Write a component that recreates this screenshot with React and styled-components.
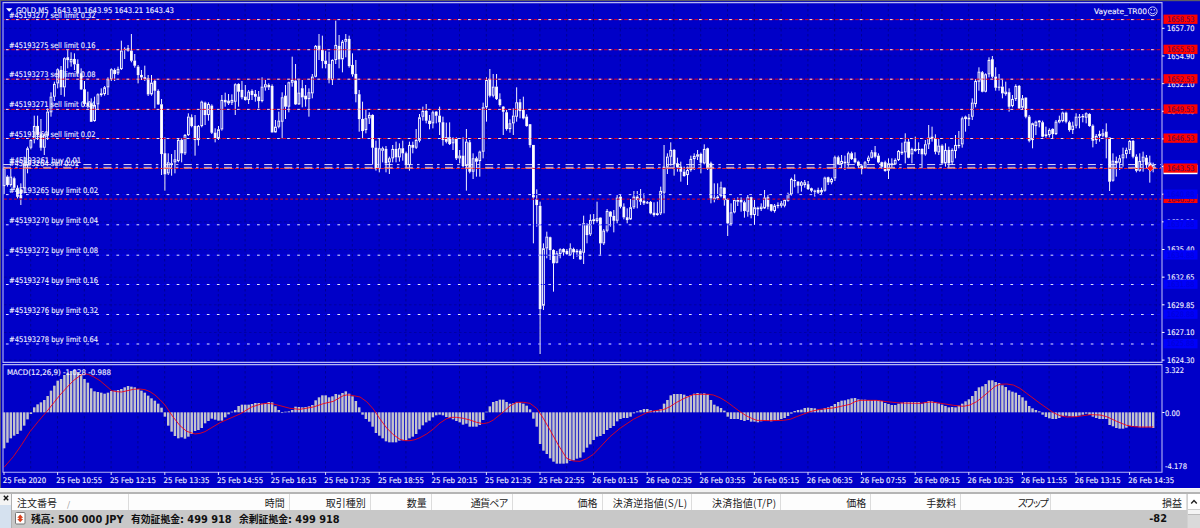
import React from 'react'
import styled, { createGlobalStyle } from 'styled-components';


const GlobalStyle = createGlobalStyle`
    body {
        margin: 0;
        overflow: hidden;
        background-color: #f0f0f0;
    }
`;

const Terminal = styled.div`
    display: flex;
    flex-direction: column;
    width: 1200px;
    height: 528px;
    overflow: hidden;
`;

const ChartPane = styled.svg`
    display: block;
    flex: none;
    background-color: #0000c8;
    font-family: "DejaVu Sans Condensed", "DejaVu Sans", sans-serif;
    font-size: 7.7px;
`;

const Splitter = styled.div`
    flex: none;
    height: 6px;
    box-sizing: border-box;
    background-color: #f1f1f1;
    border-top: 1px solid #fafafa;
    border-bottom: 2px solid #b4b4b4;
`;

const Panel = styled.div`
    display: flex;
    flex: 1;
    min-height: 0;
`;

const SideStrip = styled.div`
    display: flex;
    flex-direction: column;
    width: 12px;
    background-color: #d5e1ef;
    border-right: 1px solid #b0b0b0;
    box-sizing: border-box;
`;

const CloseBox = styled.div`
    display: flex;
    align-items: flex-start;
    justify-content: center;
    height: 11px;
    padding-top: 1px;
    box-sizing: border-box;
    background-color: #f4f4f4;
`;

const Orders = styled.div`
    display: flex;
    flex-direction: column;
    width: 1175px;
`;

const HeadRow = styled.div`
    display: flex;
    height: 16px;
    background-color: #fdfdfd;
`;

const HeadCell = styled.div`
    width: ${(props) => props.$width}px;
    box-sizing: border-box;
    padding: 0 4px 0 5px;
    border-right: 1px solid #dcdcdc;
    text-align: ${(props) => (props.$left ? 'left' : 'right')};
    font-family: "Noto Sans CJK JP", sans-serif;
    font-size: 10px;
    line-height: 17px;
    letter-spacing: ${(props) => props.$spacing || 0}px;
    white-space: pre;
    color: #222;
`;

const SortMark = styled.span`
    margin-left: 10px;
    font-size: 8px;
    color: #888;
`;

const BalanceRow = styled.div`
    display: flex;
    align-items: center;
    flex: 1;
    padding: 0 20px 1px 3px;
    background-color: #c8c8c8;
    font-family: "DejaVu Sans", "Noto Sans CJK JP", sans-serif;
    font-size: 9.8px;
    font-weight: bold;
    color: #111;
`;

const BalanceText = styled.span`
    width: ${(props) => props.$width}px;
    margin-left: ${(props) => props.$gap}px;
    white-space: pre;
`;

const Profit = styled.span`
    margin-left: auto;
`;

const Scroll = styled.div`
    display: flex;
    flex-direction: column;
    width: 13px;
    box-sizing: border-box;
    border-left: 1px solid #d0d0d0;
    background-color: #f4f4f4;
`;

const ScrollUp = styled.div`
    display: flex;
    align-items: center;
    justify-content: center;
    height: 15px;
    background-color: #fff;
    border-bottom: 1px solid #d0d0d0;
`;

const ScrollThumb = styled.div`
    flex: 1;
    margin-top: 4px;
    background-color: #dadada;
    border-top: 1px solid #bbb;
`;

const BAR = 3.35;
const barX = (i) => 4.1 + i * BAR;

// high, body top, body bottom, low (thirds of a pixel), 1 = falling bar
const candles = [
    [500,505,558,583,0],[526,530,555,560,1],[507,530,555,560,0],[530,535,563,570,1],[556,565,590,595,1],[550,570,595,615,1],[470,490,565,580,0],[440,445,495,520,0],
    [418,420,443,448,0],[347,378,418,430,0],[347,378,405,420,1],[357,403,443,452,1],[400,405,443,465,0],[325,335,407,420,0],[277,290,337,350,0],[245,252,290,303,0],
    [205,208,250,265,0],[198,210,262,285,1],[172,175,262,290,0],[150,172,180,205,1],[157,177,187,200,0],[160,177,193,210,1],[178,192,220,228,1],[205,220,268,270,1],
    [243,268,312,318,1],[275,308,318,325,1],[295,310,365,365,1],[290,315,363,365,0],[280,283,313,330,0],[265,280,285,290,0],[258,262,282,287,0],[232,238,262,285,0],
    [205,208,238,243,0],[205,210,222,243,1],[200,207,220,225,0],[122,152,207,210,0],[142,147,150,177,0],[135,145,152,155,1],[102,152,182,187,1],[162,182,197,203,1],
    [195,200,225,250,1],[210,225,232,240,1],[197,232,237,243,1],[225,235,283,288,1],[225,248,283,287,0],[237,243,272,325,1],[268,273,313,315,1],[297,313,462,525,1],
    [412,460,523,572,1],[460,487,520,525,0],[462,490,495,527,0],[450,478,487,520,0],[417,420,483,487,0],[415,420,460,487,1],[402,405,460,465,0],[340,350,405,408,0],
    [343,352,378,382,1],[345,378,420,467,1],[375,378,420,437,0],[302,305,378,382,0],[305,308,345,375,1],[307,312,345,362,0],[313,317,398,402,1],[385,398,415,427,1],
    [378,388,415,420,0],[285,300,388,392,0],[278,300,307,320,1],[282,302,310,315,0],[283,300,308,315,0],[250,253,305,345,0],[250,252,275,320,1],[243,270,292,298,1],
    [255,290,300,302,1],[270,275,300,312,0],[268,273,285,300,1],[270,282,290,305,1],[273,290,303,325,1],[232,260,303,307,0],[240,253,262,272,0],[250,255,262,270,1],
    [253,258,397,398,1],[360,380,397,398,0],[335,362,380,385,0],[277,292,365,415,0],[255,287,320,357,1],[245,247,320,337,0],[170,240,248,260,0],[192,242,313,315,1],
    [240,278,313,315,0],[240,265,292,322,1],[255,287,298,320,1],[265,277,297,350,0],[222,230,280,295,0],[135,138,230,232,0],[102,137,150,180,1],[107,150,183,205,1],
    [152,182,192,205,1],[155,192,238,250,1],[178,180,240,255,0],[62,135,180,192,0],[105,138,178,205,1],[120,125,178,217,0],[102,117,125,172,0],[107,117,198,203,1],
    [160,195,223,230,1],[180,222,282,307,1],[270,283,357,395,1],[305,357,393,415,1],[327,355,390,400,0],[337,345,355,372,0],[343,345,443,493,1],[422,443,507,512,1],
    [415,445,507,517,0],[440,445,452,487,0],[438,447,490,517,1],[470,475,487,522,0],[435,447,475,487,0],[425,447,472,487,1],[430,445,472,485,0],[422,445,460,482,1],
    [455,460,495,505,1],[425,435,495,512,0],[425,435,443,460,1],[387,420,443,447,0],[342,352,422,427,0],[320,333,350,362,0],[312,333,362,370,1],[345,362,372,388,1],
    [332,337,370,385,0],[333,335,347,370,1],[320,347,367,405,1],[350,367,420,437,1],[368,412,425,430,1],[367,412,432,435,1],[412,415,430,450,0],[412,415,475,480,1],
    [450,467,475,490,0],[412,467,498,502,1],[387,425,498,572,0],[420,427,515,520,1],[460,475,515,537,0],[470,475,485,530,1],[452,455,483,530,0],[308,322,455,475,0],
    [232,240,322,365,0],[207,237,287,292,1],[222,260,287,292,0],[222,260,297,300,1],[280,298,315,320,1],[318,320,335,405,1],[330,337,387,392,1],[358,370,387,398,0],
    [325,347,370,405,0],[262,307,350,365,0],[297,307,333,355,1],[290,330,355,358,1],[343,350,378,380,1],[372,373,435,443,1],[435,435,592,730,1],[568,598,615,680,1],
    [605,618,927,1062,1],[730,745,917,930,0],[695,710,745,775,0],[710,712,750,780,1],[748,750,790,875,1],[753,760,788,790,0],[745,748,762,775,0],[745,747,757,767,1],
    [747,753,762,765,1],[730,745,765,765,0],[743,747,757,777,1],[747,752,757,770,1],[747,752,778,780,1],[647,670,758,792,0],[670,672,705,730,1],[643,660,703,708,0],
    [642,658,663,673,1],[605,655,663,668,0],[652,653,730,765,1],[687,692,730,735,0],[627,633,692,697,0],[633,635,650,680,1],[630,648,662,697,1],[585,593,662,670,0],
    [583,590,620,625,1],[610,620,652,658,1],[625,652,660,670,1],[597,622,658,660,0],[573,590,622,627,0],[573,590,600,625,1],[567,595,605,615,1],[580,603,610,615,1],
    [603,607,610,612,1],[603,606,640,643,1],[607,638,645,650,1],[605,640,645,647,1],[560,573,640,645,0],[435,500,578,640,0],[460,470,500,522,0],[427,450,470,497,0],
    [447,450,493,527,1],[473,490,502,515,1],[485,500,515,545,1],[500,515,528,530,1],[500,510,525,555,0],[467,477,510,515,0],[460,468,477,510,0],[450,463,470,480,0],
    [458,462,488,520,1],[433,447,490,493,0],[443,445,505,510,1],[485,490,595,610,1],[550,593,598,607,1],[550,590,595,600,0],[545,562,588,592,0],[562,563,600,617,1],
    [595,597,670,708,1],[610,637,673,677,0],[595,600,637,640,0],[592,600,605,618,0],[592,600,607,635,1],[602,607,633,653,1],[585,592,635,650,0],[590,592,645,655,1],
    [600,622,645,675,0],[620,623,628,648,1],[610,620,627,633,0],[570,593,625,627,0],[583,592,620,628,1],[612,613,632,635,1],[612,617,633,638,0],[607,615,618,625,1],
    [603,610,617,623,0],[598,600,617,622,0],[578,582,602,605,0],[533,537,583,587,0],[523,540,543,562,1],[543,545,557,580,1],[543,547,557,575,0],[540,547,555,563,0],
    [543,553,567,570,1],[563,565,572,577,1],[569,572,574,590,1],[563,570,578,582,1],[563,570,577,582,0],[530,533,572,575,0],[530,532,547,555,1],[533,537,547,553,0],
    [467,472,535,543,0],[467,472,493,495,1],[465,483,492,505,0],[467,485,490,510,1],[455,460,490,500,0],[455,460,477,480,1],[457,475,487,490,1],[482,485,497,505,1],
    [493,497,507,523,1],[483,487,505,507,0],[467,473,483,490,0],[450,457,473,475,0],[438,457,470,475,1],[460,467,487,490,1],[485,487,500,507,1],[482,487,513,515,1],
    [475,490,512,537,0],[475,490,495,503,0],[475,480,493,495,0],[450,453,480,483,0],[428,455,460,465,0],[400,425,457,490,0],[417,425,473,475,1],[443,447,463,490,0],
    [410,447,453,455,0],[427,447,450,462,1],[445,447,463,505,1],[420,433,463,467,0],[375,413,433,447,0],[380,410,417,425,1],[403,415,455,463,1],[417,437,457,465,0],
    [433,437,490,495,1],[430,450,490,500,0],[440,450,490,505,1],[445,450,487,495,0],[405,435,453,475,0],[393,435,438,445,1],[350,355,433,443,0],[347,350,357,395,0],
    [342,353,358,378,0],[295,308,350,360,0],[237,243,312,322,0],[202,215,245,272,0],[213,217,275,277,1],[220,223,275,277,0],[172,180,223,232,0],[168,178,230,235,1],
    [202,230,263,272,1],[222,260,263,272,1],[240,260,280,295,1],[245,275,282,287,0],[265,277,320,335,1],[285,297,318,322,0],[253,258,297,303,0],[255,258,325,327,1],
    [285,295,323,330,0],[292,293,350,355,1],[345,350,422,427,1],[368,370,420,445,0],[362,365,378,405,0],[360,362,367,382,1],[362,367,410,412,1],[380,403,408,413,0],
    [385,390,405,412,0],[385,387,402,415,1],[360,365,402,405,0],[347,360,367,370,0],[335,338,363,367,0],[335,338,365,370,1],[362,367,390,395,1],[365,377,390,402,0],
    [340,350,377,385,0],[342,350,353,385,1],[342,348,352,367,1],[337,340,353,370,0],[340,342,378,380,1],[373,377,422,442,1],[402,408,420,432,0],[392,402,408,425,0],
    [387,400,407,412,0],[370,395,412,475,1],[412,413,545,573,1],[460,482,542,545,0],[470,483,490,530,1],[465,475,488,510,0],[443,463,475,500,0],[443,450,462,475,0],
    [420,423,450,462,0],[420,423,470,475,1],[463,470,512,517,1],[460,483,512,515,0],[455,470,485,515,0],[465,473,495,505,1],[467,487,510,548,1],[488,495,505,517,0],
];

// tip of each MACD bar, zero line at 157
const ZERO = 157;
const macd = [
    265,248,235,227,222,212,197,178,162,142,133,127,120,108,92,77,62,57,45,38,33,30,36,42,57,68,85,94,96,98,101,98,93,92,90,87,82,78,80,82,
    87,92,98,107,115,122,131,143,170,197,215,228,235,232,236,230,222,213,210,204,190,183,176,179,182,182,172,163,155,150,138,134,134,134,132,129,129,131,130,126,
    127,139,150,159,155,154,150,140,141,142,141,139,135,121,112,106,106,112,109,102,104,99,94,101,109,123,142,164,177,185,200,219,227,235,244,247,247,247,242,241,
    241,235,230,222,208,196,187,182,172,166,164,166,171,174,178,183,187,194,191,200,200,200,195,180,155,139,126,123,119,119,126,131,130,127,127,131,137,148,176,200,
    252,272,282,295,305,311,311,311,310,302,301,296,293,277,263,253,240,230,228,222,210,204,198,184,177,174,174,170,160,154,150,147,147,151,153,151,147,131,120,106,
    102,102,102,104,108,105,101,99,101,100,103,120,134,139,144,152,170,177,177,177,180,183,180,185,185,187,184,182,182,184,181,180,177,174,168,161,153,150,149,144,
    143,144,145,149,149,144,142,138,132,126,122,121,118,115,114,118,119,119,120,121,120,121,123,129,132,135,135,131,128,126,126,126,126,126,131,127,123,124,127,130,
    134,138,142,141,142,137,131,124,118,108,93,82,79,72,61,61,66,69,76,81,91,95,98,105,112,122,138,145,150,154,164,171,175,177,177,174,168,167,169,170,
    170,167,164,161,165,170,174,177,177,177,195,199,204,206,206,203,198,198,199,202,202,202,202,204,
];

const signal = '12,322 40,290 65,254 90,215 115,184 140,155 180,105 200,83 220,62 243,45 254,42 265,43 280,50 300,62 335,92 350,95 365,96 400,88 418,87 435,89 450,95 465,105 480,119 495,135 517,168 540,197 560,214 585,222 600,220 615,215 660,188 720,162 755,141 780,133 800,130 820,132 840,137 870,145 900,148 940,141 970,131 1000,124 1030,107 1040,105 1050,105 1080,111 1100,125 1120,147 1140,177 1160,204 1180,224 1200,238 1215,242 1230,242 1245,239 1260,233 1280,222 1300,207 1320,189 1340,176 1355,172 1370,172 1390,175 1410,180 1430,187 1450,191 1465,188 1480,180 1505,160 1530,138 1550,127 1570,127 1590,130 1610,145 1630,175 1650,210 1675,255 1700,295 1720,303 1740,304 1760,296 1780,283 1800,262 1830,230 1860,205 1900,178 1940,158 1965,152 1990,149 2010,140 2030,127 2055,114 2080,104 2100,103 2125,103 2140,105 2160,113 2180,125 2200,140 2220,155 2240,168 2255,175 2270,181 2310,182 2350,181 2370,178 2390,170 2430,155 2460,148 2500,144 2550,133 2565,125 2580,121 2630,121 2660,125 2690,128 2700,129 2760,130 2790,126 2810,128 2830,131 2860,136 2890,139 2910,135 2930,125 2950,109 2970,92 2985,79 3000,73 3020,72 3040,75 3060,85 3080,100 3120,130 3160,158 3180,167 3200,171 3230,170 3270,164 3300,165 3320,170 3335,177 3350,184 3380,196 3400,200 3420,201 3460,201';

const orders = [
    { y: 19.6, label: '#45193277 sell limit 0.32', side: 'sell', price: '1658.53' },
    { y: 49.7, label: '#45193275 sell limit 0.16', side: 'sell', price: '1655.53' },
    { y: 79.2, label: '#45193273 sell limit 0.08', side: 'sell', price: '1652.53' },
    { y: 109.4, label: '#45193271 sell limit 0.04', side: 'sell', price: '1649.53' },
    { y: 138.5, label: '#45193269 sell limit 0.02', side: 'sell', price: '1646.53' },
    { y: 194.6, label: '#45193265 buy limit 0.02', side: 'buy', price: '1640.88' },
    { y: 224.8, label: '#45193270 buy limit 0.04', side: 'buy', price: '1637.88' },
    { y: 255.2, label: '#45193272 buy limit 0.08', side: 'buy', price: '1634.88' },
    { y: 284.5, label: '#45193274 buy limit 0.16', side: 'buy', price: '1631.88' },
    { y: 314.5, label: '#45193276 buy limit 0.32', side: 'buy', price: '1628.88' },
    { y: 344, label: '#45193278 buy limit 0.64', side: 'buy', price: '1625.88' },
];

const prices = ['1657.70', '1654.90', '1652.10', '1649.35', '1646.55', '1643.80', '1641.00', '1638.20', '1635.40', '1632.65', '1629.85', '1627.10', '1624.30'];

const times = [
    '25 Feb 2020', '25 Feb 10:55', '25 Feb 12:15', '25 Feb 13:35', '25 Feb 14:55', '25 Feb 16:15', '25 Feb 17:35', '25 Feb 18:55',
    '25 Feb 20:15', '25 Feb 21:35', '25 Feb 22:55', '26 Feb 01:15', '26 Feb 02:35', '26 Feb 03:55', '26 Feb 05:15', '26 Feb 06:35',
    '26 Feb 07:55', '26 Feb 09:15', '26 Feb 10:35', '26 Feb 11:55', '26 Feb 13:15', '26 Feb 14:35',
];

const columns = [
    { name: '時間', width: 161 },
    { name: '取引種別', width: 81 },
    { name: '数量', width: 61 },
    { name: '通貨ペア', width: 81, spacing: -0.8 },
    { name: '価格', width: 90 },
    { name: '決済逆指値(S/L)', width: 90, spacing: 0.25 },
    { name: '決済指値(T/P)', width: 89, spacing: 0.25 },
    { name: '価格', width: 90 },
    { name: '手数料', width: 90 },
    { name: 'スワップ', width: 90, spacing: -2.8 },
    { name: '損益', width: 136 },
];

function Label({ x, y, width, fill = '#f0f0ff', children }) {
    return (
        <text x={x} y={y} fill={fill} stroke={fill} strokeWidth="0.12" textLength={width} lengthAdjust="spacingAndGlyphs" xmlSpace="preserve">{children}</text>
    );
}

function Grid() {
    return (
        <g stroke="#00008c" strokeWidth="0.9" strokeDasharray="2.5 2.5">
            {Array.from({ length: 43 }, (_, i) => (
                <path key={i} d={`M${30.7 + i * 26.8} 4V362M${30.7 + i * 26.8} 366V472`} />
            ))}
            {prices.map((price, i) => (
                <path key={price} d={`M4 ${28.3 + i * 27.65}H1161`} opacity="0.75" />
            ))}
        </g>
    );
}

function Candles() {
    return (
        <g stroke="#fff" strokeWidth="0.95">
            {candles.map(([high, top, bottom, low, down], i) => {
                const x = barX(i);
                return (
                    <g key={i}>
                        <path d={`M${x} ${high / 3}V${top / 3}M${x} ${bottom / 3}V${low / 3}`} />
                        <rect
                            x={x - 0.88}
                            y={top / 3 + 0.4}
                            width="1.76"
                            height={Math.max((bottom - top) / 3 - 0.8, 0.2)}
                            fill={down ? '#fff' : '#0000c8'}
                        />
                    </g>
                );
            })}
        </g>
    );
}

function OrderLines() {
    return (
        <g strokeWidth="0.95">
            {orders.map(({ y, side }) => (
                <g key={y}>
                    <path d={`M4 ${y}H1161`} stroke={side === 'sell' ? '#e60018' : '#0000f0'} strokeDasharray="3.6 1.4225" strokeDashoffset="2.6" />
                    <path d={`M5.9 ${y}H1161`} stroke="#f0f0ff" strokeDasharray="2.7 7.345" />
                </g>
            ))}
            <path d="M3 164.6H1161" stroke="#f0f0ff" strokeDasharray="8 4.2 2.5 5.39" />
            <path d="M3 167.3H1161" stroke="#c8c8ff" strokeDasharray="8 4.2 2.5 5.39" />
            <path d="M4 168.5H1161" stroke="#f01818" strokeDasharray="3.6 1.4225" />
            <path d="M3 168.2H1161" stroke="#ff9a70" strokeDasharray="8 12.09" />
            <path d="M4 199.1H1161" stroke="#b00040" strokeWidth="1.3" strokeDasharray="2.8 2.2225" />
        </g>
    );
}

function PriceAxis() {
    return (
        <g>
            {prices.map((price, i) => (
                <g key={price}>
                    <path d={`M1162 ${28.3 + i * 27.65}h2.5`} stroke="#fff" />
                    <Label x={1167} y={31.2 + i * 27.65} width={27.5}>{price}</Label>
                </g>
            ))}
            <path d="M1163.5 130h34v8h-34zM1163.5 160h34v8h-34z" fill="#0000fa" />
            <rect x="1163.5" y="165" width="34" height="9.2" fill="#fff" />
            <rect x="1163.5" y="194" width="34" height="9" fill="#f00" />
            <Label x={1167} y={201.8} width={27.5} fill="#640a50">1640.55</Label>
            {orders.map(({ y, side, price }) => (
                <g key={price}>
                    <rect x="1163.5" y={y - 5} width="34" height="9.3" fill={side === 'sell' ? '#f00' : '#0000fa'} />
                    <Label x={1167} y={y + 2.4} width={27.5} fill={side === 'sell' ? '#640a50' : '#0000dc'}>{price}</Label>
                </g>
            ))}
            <rect x="1163.5" y="163.5" width="34" height="9.2" fill="#f00" />
            <Label x={1167} y={171} width={27.5} fill="#640a50">1643.53</Label>
        </g>
    );
}

function Macd() {
    return (
        <g transform="translate(0 360)">
            {macd.map((tip, i) => (
                <rect
                    key={i}
                    x={barX(i) - 1.25}
                    y={Math.min(tip, ZERO) / 3}
                    width="2.5"
                    height={Math.max(Math.abs(tip - ZERO) / 3, 0.7)}
                    fill="#c4c4cc"
                />
            ))}
            <polyline points={signal} transform="scale(0.33333)" fill="none" stroke="#f00010" strokeWidth="2.6" />
            <Label x={7} y={14.7} width={104}>MACD(12,26,9) -1.028 -0.988</Label>
            <path d="M1162 52.5h2.5" stroke="#fff" />
            <Label x={1165} y={13} width={19}>3.322</Label>
            <Label x={1165} y={55.8} width={15}>0.00</Label>
            <Label x={1165} y={109.3} width={22}>-4.178</Label>
        </g>
    );
}

function Chart() {
    return (
        <ChartPane width="1200" height="488" viewBox="0 0 1200 488">
            <rect width="1200" height="1.2" fill="#5c5c68" />
            <rect width="1" height="488" fill="#5c5c80" />
            <Grid />
            <Candles />
            <OrderLines />
            {orders.map(({ y, label, side }, i) => (
                <Label key={label} x={9} y={i === 0 ? 17.8 : y - 2} width={side === 'sell' ? 86.5 : 89}>{label}</Label>
            ))}
            <Label x={9} y={162.8} width={72}>#45193261 buy 0.01</Label>
            <Label x={9} y={165.8} width={70}>#45193264 sell 0.01</Label>
            <path d="M6 8.3h6.4l-3.2 3.4z" fill="#fff" />
            <Label x={16} y={12.6} width={158}>{'GOLD,M5  1643.91 1643.95 1643.21 1643.43'}</Label>
            <Label x={1094} y={13.6} width={53}>Vayeate_TR00</Label>
            <g fill="none" stroke="#e8e8ff" strokeWidth="0.9">
                <circle cx="1152.7" cy="11.3" r="4.4" />
                <path d="M1149.8 12.2q2.9 3.2 5.8 0" />
                <path d="M1151.2 9v1.5M1154.3 9v1.5" strokeWidth="1.1" />
            </g>
            <path d="M1150.5 164.8l3.2 3.4-3.2 3.4-3.4-3.4z" fill="#ff1010" stroke="#fff" strokeWidth="0.4" />
            <path d="M1147.5 165.2l3-3 3 3" fill="none" stroke="#6a6aff" />
            <Macd />
            <g fill="none" stroke="#b4b4f4" strokeWidth="1.1">
                <path d="M3 2.6H1162V362.4H3z" />
                <path d="M3 364.6H1162V472.3H3z" />
            </g>
            <PriceAxis />
            {times.map((time, i) => (
                <g key={time}>
                    <path d={`M${4 + i * 53.6} 472v3`} stroke="#d8d8ff" />
                    <Label x={2.7 + i * 53.6} y={482.8} width={i === 0 ? 43.5 : 46}>{time}</Label>
                </g>
            ))}
        </ChartPane>
    );
}

export default function App() {
  return (
    <>
    <GlobalStyle />
    <Terminal>
        <Chart />
        <Splitter />
        <Panel>
            <SideStrip>
                <CloseBox>
                    <svg width="6" height="6" viewBox="0 0 6 6"><path d="M.8.8l4.4 4.4M5.2.8L.8 5.2" stroke="#111" strokeWidth="1.4" /></svg>
                </CloseBox>
            </SideStrip>
            <Orders>
                <HeadRow>
                    <HeadCell $width={117} $left>注文番号<SortMark>/</SortMark></HeadCell>
                    {columns.map((col, i) => (
                        <HeadCell key={i} $width={col.width} $spacing={col.spacing}>{col.name}</HeadCell>
                    ))}
                </HeadRow>
                <BalanceRow>
                    <svg width="11" height="13" viewBox="0 0 11 13">
                        <rect x="0.5" y="0.5" width="9.5" height="11.5" rx="1" fill="#fff" stroke="#777" />
                        <path d="M5.2 2.5L8.2 5.8H6.6V7H8.2L5.2 10.3L2.2 7H3.8V5.8H2.2z" fill="#d8401c" />
                    </svg>
                    <BalanceText $gap={5} $width={93}>残高: 500 000 JPY</BalanceText>
                    <BalanceText $gap={7} $width={101}>有効証拠金: 499 918</BalanceText>
                    <BalanceText $gap={7} $width={101}>余剰証拠金: 499 918</BalanceText>
                    <Profit>-82</Profit>
                </BalanceRow>
            </Orders>
            <Scroll>
                <ScrollUp>
                    <svg width="8" height="6" viewBox="0 0 8 6"><path d="M1.2 4.6L4 1.6l2.8 3" fill="none" stroke="#222" strokeWidth="1.4" /></svg>
                </ScrollUp>
                <ScrollThumb />
            </Scroll>
        </Panel>
    </Terminal>
    </>
  )
}
